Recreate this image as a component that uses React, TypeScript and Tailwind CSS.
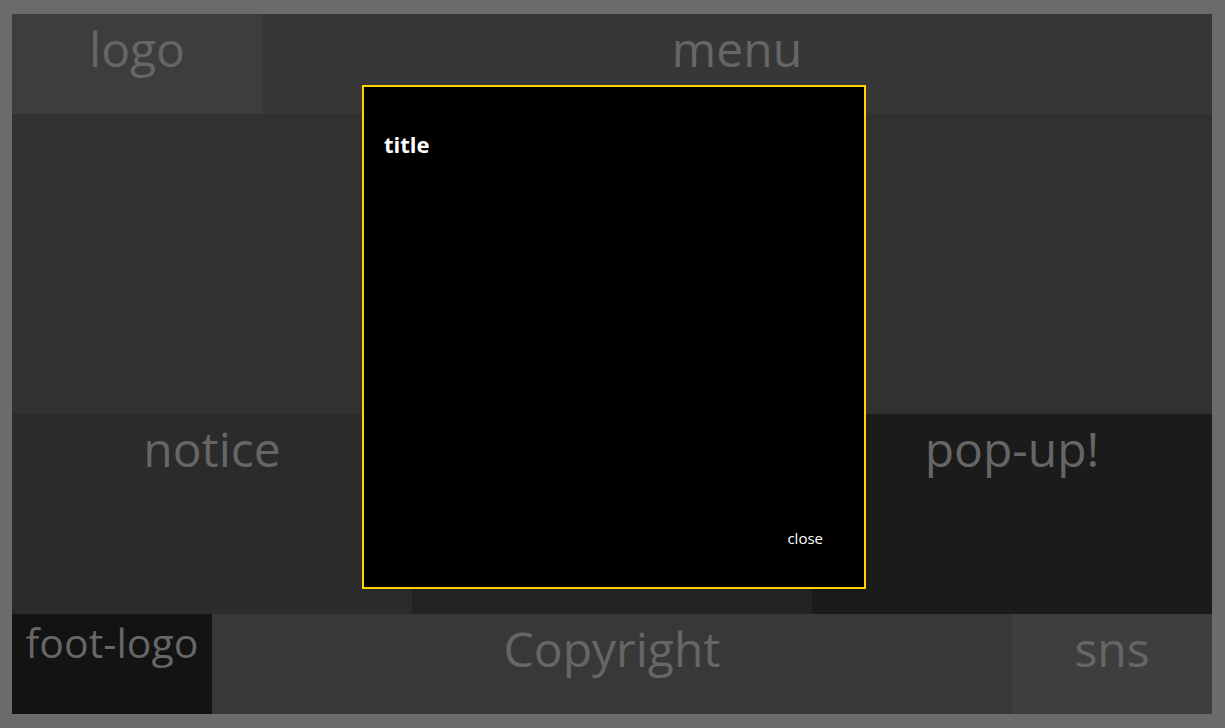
import React from 'react';

// Page skeleton with labelled placeholder blocks and a pop-up on top.

const label = "text-[48px] leading-none pt-[11px] text-center text-[#666666]";

const App: React.FC = () => {
  return (
    <div
      className="relative w-[1225px] h-[728px] bg-[#6b6b6b] pt-[14px] pl-[12px] overflow-hidden"
      style={{ fontFamily: '"Open Sans", "Noto Sans", sans-serif' }}
    >
      <div className="w-[1200px] h-[700px] flex flex-col">
        {/* Header */}
        <div className="flex h-[100px]">
          <div className={`w-[250px] bg-[#3d3d3d] ${label}`}>logo</div>
          <div className={`flex-1 bg-[#373737] ${label}`}>menu</div>
        </div>

        {/* Main visual */}
        <div className="h-[300px] bg-[#313131]" />

        {/* Content row */}
        <div className="flex h-[200px]">
          <div className={`w-[400px] bg-[#2b2b2b] ${label}`}>notice</div>
          <div className="w-[400px] bg-[#232323]" />
          <div className={`w-[400px] bg-[#1b1b1b] ${label}`}>pop-up!</div>
        </div>

        {/* Footer */}
        <div className="flex h-[100px]">
          <div className="w-[200px] bg-[#131313] text-[41px] leading-none pt-[8px] text-center text-[#666666] whitespace-nowrap">
            foot-logo
          </div>
          <div className={`w-[800px] bg-[#383838] ${label}`}>Copyright</div>
          <div className={`w-[200px] bg-[#3e3e3e] ${label}`}>sns</div>
        </div>
      </div>

      {/* Modal */}
      <div className="absolute left-[362px] top-[85px] w-[504px] h-[504px] border-2 border-[#ffd400] bg-black">
        <div className="pt-[46px] pl-[20px] text-[22px] leading-none font-bold text-white">title</div>
        <div className="absolute right-[41px] bottom-[41px] text-[15px] leading-none text-white">close</div>
      </div>
    </div>
  );
};

export default App;
